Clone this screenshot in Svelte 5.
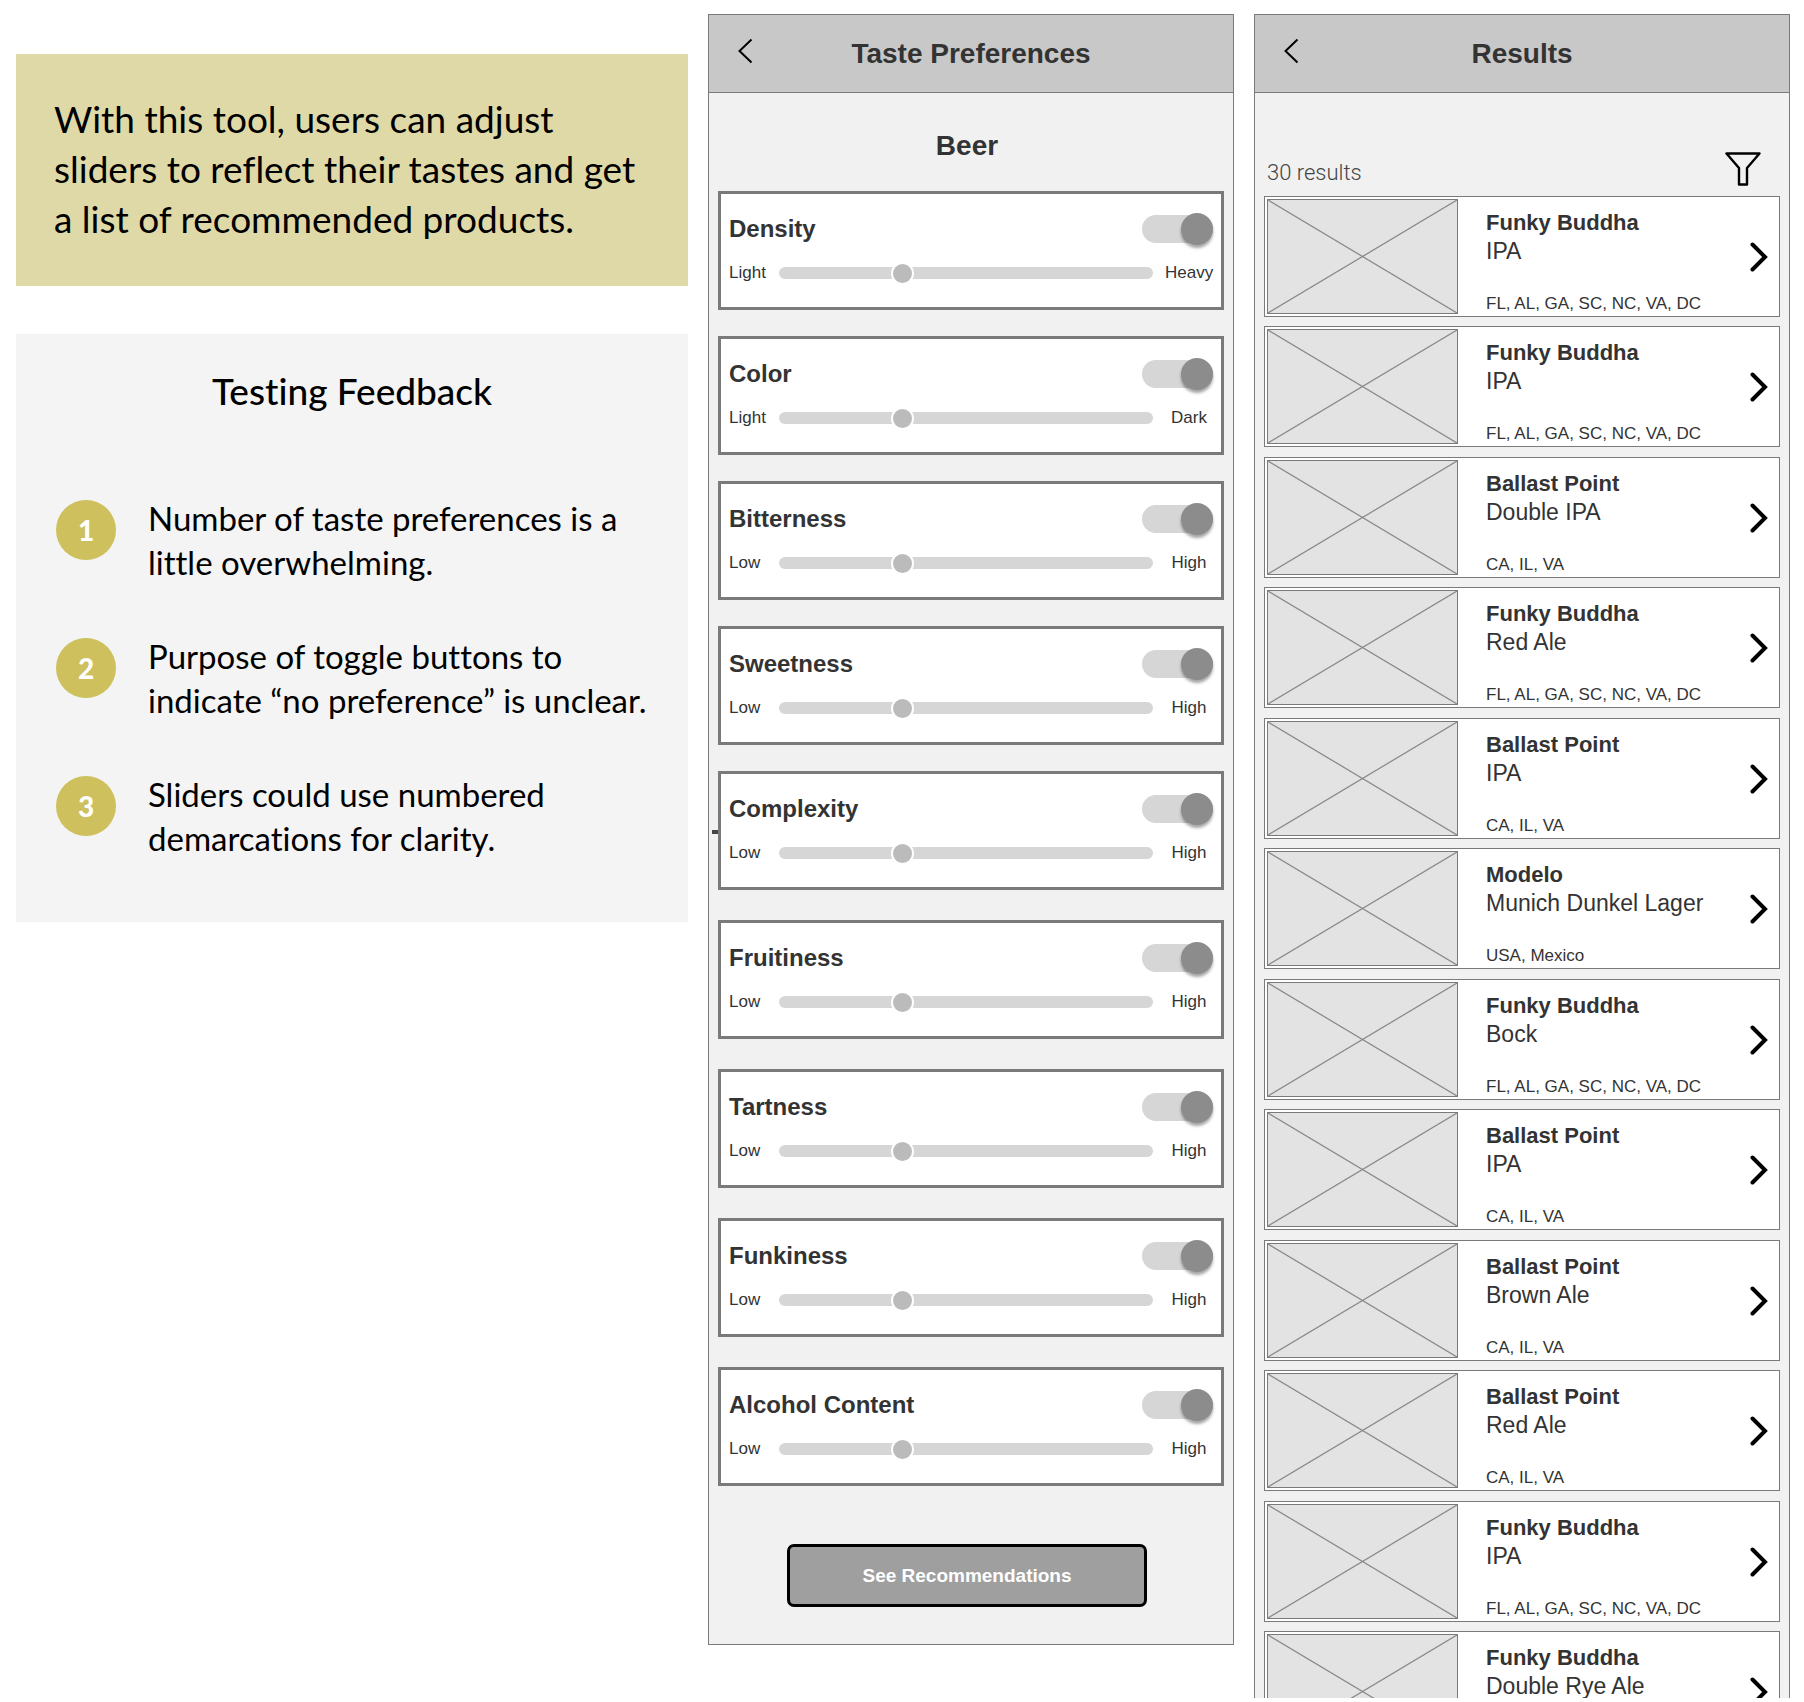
<script lang="ts">
	const feedback = [
		'Number of taste preferences is a little overwhelming.',
		'Purpose of toggle buttons to indicate “no preference” is unclear.',
		'Sliders could use numbered demarcations for clarity.'
	];

	function taste(name: string, low = 'Low', high = 'High') {
		return { name, low, high, value: 32, on: true };
	}

	let groups = $state([
		[
			taste('Density', 'Light', 'Heavy'),
			taste('Color', 'Light', 'Dark'),
			taste('Bitterness'),
			taste('Sweetness'),
			taste('Complexity')
		],
		[taste('Fruitiness'), taste('Tartness'), taste('Funkiness'), taste('Alcohol Content')]
	]);

	const southeast = 'FL, AL, GA, SC, NC, VA, DC';
	const coasts = 'CA, IL, VA';

	const results = [
		{ brewery: 'Funky Buddha', style: 'IPA', states: southeast },
		{ brewery: 'Funky Buddha', style: 'IPA', states: southeast },
		{ brewery: 'Ballast Point', style: 'Double IPA', states: coasts },
		{ brewery: 'Funky Buddha', style: 'Red Ale', states: southeast },
		{ brewery: 'Ballast Point', style: 'IPA', states: coasts },
		{ brewery: 'Modelo', style: 'Munich Dunkel Lager', states: 'USA, Mexico' },
		{ brewery: 'Funky Buddha', style: 'Bock', states: southeast },
		{ brewery: 'Ballast Point', style: 'IPA', states: coasts },
		{ brewery: 'Ballast Point', style: 'Brown Ale', states: coasts },
		{ brewery: 'Ballast Point', style: 'Red Ale', states: coasts },
		{ brewery: 'Funky Buddha', style: 'IPA', states: southeast },
		{ brewery: 'Funky Buddha', style: 'Double Rye Ale', states: '' }
	];
</script>

{#snippet header(title: string)}
	<header>
		<button class="back" aria-label="Back">
			<svg width="16" height="26" viewBox="0 0 16 26">
				<path d="M14.5 1.5 2.5 13l12 11.5" fill="none" stroke="#000" stroke-width="2" />
			</svg>
		</button>
		<h2>{title}</h2>
	</header>
{/snippet}

<main>
	<section class="notes">
		<p class="intro">
			With this tool, users can adjust sliders to reflect their tastes and get a list of
			recommended products.
		</p>

		<div class="feedback">
			<h1>Testing Feedback</h1>
			<ol>
				{#each feedback as item, i}
					<li>
						<span class="number">{i + 1}</span>
						<p>{item}</p>
					</li>
				{/each}
			</ol>
		</div>
	</section>

	<section class="phone preferences">
		{@render header('Taste Preferences')}
		<h3>Beer</h3>

		{#each groups as group, g}
			<div class="group">
				{#each group as item, i}
					<div class="card" class:ticked={item.name === 'Complexity'}>
						<div class="top">
							<label class="name" for="toggle-{g}-{i}">{item.name}</label>
							<input class="toggle" type="checkbox" id="toggle-{g}-{i}" bind:checked={item.on} />
						</div>
						<div class="scale">
							<span>{item.low}</span>
							<input type="range" aria-label={item.name} bind:value={item.value} disabled={!item.on} />
							<span class="high">{item.high}</span>
						</div>
					</div>
				{/each}
			</div>
		{/each}

		<div class="actions">
			<button class="submit">See Recommendations</button>
		</div>
	</section>

	<section class="phone results">
		{@render header('Results')}
		<div class="toolbar">
			<span>30 results</span>
			<button aria-label="Filter results">
				<svg width="36" height="34" viewBox="0 0 36 34">
					<path
						d="M1.5 1.5h33L22 16v16.5h-8V16Z"
						fill="none"
						stroke="#000"
						stroke-width="2.4"
						stroke-linejoin="round"
					/>
				</svg>
			</button>
		</div>

		<ul>
			{#each results as beer}
				<li>
					<svg class="picture" viewBox="0 0 191 115" preserveAspectRatio="none">
						<path d="M0 0 191 115M191 0 0 115" />
					</svg>
					<div class="details">
						<strong>{beer.brewery}</strong>
						<span>{beer.style}</span>
						<small>{beer.states}</small>
					</div>
					<button aria-label="Open {beer.brewery} {beer.style}">
						<svg width="18" height="30" viewBox="0 0 18 30">
							<path
								d="M2.5 2.5 15 15 2.5 27.5"
								fill="none"
								stroke="#000"
								stroke-width="4"
								stroke-linecap="round"
							/>
						</svg>
					</button>
				</li>
			{/each}
		</ul>
	</section>
</main>

<style>
	:global(body) {
		background: #fff;
	}

	main {
		display: grid;
		grid-template-columns: 672fr 526fr 536fr;
		grid-template-rows: minmax(0, 1fr);
		gap: 20px;
		align-items: start;
		height: 100vh;
		box-sizing: border-box;
		padding: 14px 14px 4px 16px;
		font-family: 'Liberation Sans', Arial, sans-serif;
		color: #333;
	}

	h1,
	h2,
	h3,
	p,
	ol,
	ul {
		margin: 0;
		padding: 0;
	}

	ol,
	ul {
		list-style: none;
	}

	button {
		display: block;
		padding: 0;
		border: 0;
		background: none;
		font-family: inherit;
		cursor: pointer;
	}

	svg {
		display: block;
	}

	/* notes */
	.notes {
		display: flex;
		flex-direction: column;
		gap: 48px;
		padding-top: 40px;
		font-family: Lato, sans-serif;
		font-variant-ligatures: none;
		color: #000;
	}

	.intro {
		padding: 40px 44px 42px 38px;
		background: #dfd9a8;
		font-size: 37px;
		line-height: 50px;
	}

	.feedback {
		padding: 32px 20px 62px 40px;
		background: #f4f4f4;
	}

	.feedback h1 {
		padding-right: 20px;
		font-size: 37px;
		font-weight: 500;
		line-height: 50px;
		text-align: center;
	}

	.feedback ol {
		display: flex;
		flex-direction: column;
		gap: 50px;
		padding-top: 80px;
	}

	.feedback li {
		display: flex;
		gap: 32px;
	}

	.feedback li p {
		font-size: 33px;
		line-height: 44px;
	}

	.number {
		flex: none;
		width: 60px;
		height: 60px;
		margin-top: 4px;
		border-radius: 50%;
		background: #cdc05d;
		color: #fff;
		font-size: 28px;
		font-weight: 900;
		line-height: 60px;
		text-align: center;
	}

	/* phones */
	.phone {
		border: 1px solid #7a7a7a;
		background: #f1f1f1;
	}

	header {
		display: grid;
		grid-template-columns: 60px 1fr 60px;
		align-items: center;
		height: 77px;
		border-bottom: 1px solid #7a7a7a;
		background: #c8c8c8;
	}

	.back {
		padding: 0 0 6px 28px;
	}

	h2,
	h3 {
		font-size: 28px;
		font-weight: 700;
		line-height: 34px;
		text-align: center;
	}

	/* taste preferences */
	.preferences {
		padding-bottom: 37px;
	}

	.preferences h3 {
		padding: 36px 8px 28px 0;
	}

	.group {
		display: flex;
		flex-direction: column;
		gap: 26px;
		padding: 0 9px;
	}

	.group + .group {
		gap: 30px;
		padding-top: 30px;
	}

	.card {
		position: relative;
		height: 119px;
		box-sizing: border-box;
		padding: 19px 8px 0;
		border: 3px solid #7a7a7a;
		background: #fff;
	}

	.ticked::before {
		content: '';
		position: absolute;
		top: 56px;
		left: -9px;
		width: 6px;
		height: 4px;
		background: #444;
	}

	.top {
		display: flex;
		align-items: center;
		justify-content: space-between;
		height: 32px;
	}

	.name {
		font-size: 24px;
		font-weight: 700;
	}

	.toggle {
		appearance: none;
		display: flex;
		align-items: center;
		width: 71px;
		height: 28px;
		margin: 0;
		border-radius: 14px;
		background: #d6d6d6;
	}

	.toggle::before {
		content: '';
		width: 32px;
		height: 32px;
		flex: none;
		border-radius: 50%;
		background: #8c8c8c;
		box-shadow: 0 3px 3px rgb(0 0 0 / 35%);
	}

	.toggle:checked {
		justify-content: flex-end;
	}

	.scale {
		display: grid;
		grid-template-columns: 50px 1fr 60px;
		align-items: center;
		height: 20px;
		padding-top: 18px;
		font-size: 17px;
		line-height: 20px;
	}

	.high {
		padding-left: 12px;
		text-align: center;
	}

	input[type='range'] {
		appearance: none;
		width: 100%;
		height: 12px;
		margin: 0;
		border-radius: 6px;
		background: #d6d6d6;
	}

	input[type='range']::-webkit-slider-thumb {
		appearance: none;
		width: 23px;
		height: 23px;
		border: 2px solid #fff;
		border-radius: 50%;
		background: #bbb;
	}

	.actions {
		padding: 58px 8px 0 0;
	}

	.submit {
		width: 360px;
		height: 63px;
		margin: 0 auto;
		border: 3px solid #000;
		border-radius: 7px;
		background: #9f9f9f;
		color: #fff;
		font-size: 19px;
		font-weight: 700;
	}

	/* results */
	.results {
		align-self: stretch;
		border-bottom: 0;
		overflow: hidden;
	}

	.toolbar {
		display: flex;
		align-items: flex-end;
		justify-content: space-between;
		padding: 59px 28px 10px 12px;
		font-family: Roboto, sans-serif;
		font-size: 22px;
		font-weight: 300;
		line-height: 26px;
		color: #444;
	}

	.results ul {
		padding: 0 9px;
	}

	.results li {
		display: flex;
		align-items: center;
		margin-bottom: 9px;
		padding: 2px 11px 2px 2px;
		border: 1px solid #7a7a7a;
		background: #fff;
	}

	.results li:nth-child(even) {
		margin-bottom: 10px;
	}

	.picture {
		flex: none;
		box-sizing: border-box;
		width: 191px;
		height: 115px;
		border: 1px solid #7a7a7a;
		background: #e3e3e3;
	}

	.picture path {
		fill: none;
		stroke: #8a8a8a;
		stroke-width: 1.3;
	}

	.details {
		flex: 1;
		display: flex;
		flex-direction: column;
		align-self: stretch;
		padding: 9px 0 0 28px;
		line-height: 29px;
	}

	.details strong {
		font-size: 22px;
	}

	.details span {
		font-size: 23px;
	}

	.details small {
		padding-top: 27px;
		font-size: 17px;
		line-height: 21px;
	}
</style>
